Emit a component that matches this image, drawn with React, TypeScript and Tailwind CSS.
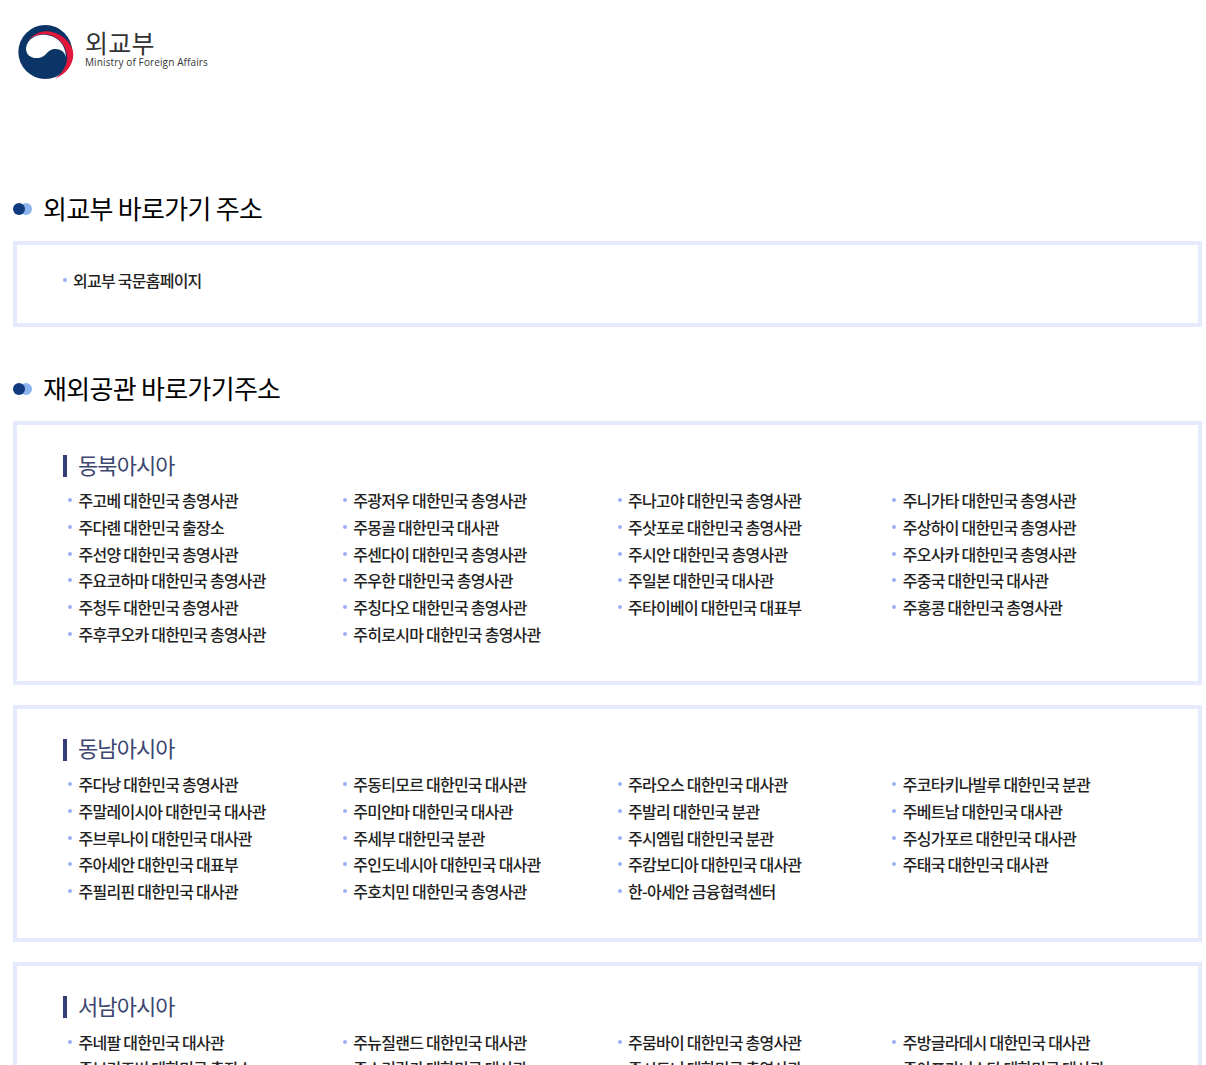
const northeast = [
  '주고베 대한민국 총영사관', '주광저우 대한민국 총영사관', '주나고야 대한민국 총영사관', '주니가타 대한민국 총영사관',
  '주다롄 대한민국 출장소', '주몽골 대한민국 대사관', '주삿포로 대한민국 총영사관', '주상하이 대한민국 총영사관',
  '주선양 대한민국 총영사관', '주센다이 대한민국 총영사관', '주시안 대한민국 총영사관', '주오사카 대한민국 총영사관',
  '주요코하마 대한민국 총영사관', '주우한 대한민국 총영사관', '주일본 대한민국 대사관', '주중국 대한민국 대사관',
  '주청두 대한민국 총영사관', '주칭다오 대한민국 총영사관', '주타이베이 대한민국 대표부', '주홍콩 대한민국 총영사관',
  '주후쿠오카 대한민국 총영사관', '주히로시마 대한민국 총영사관',
];

const southeast = [
  '주다낭 대한민국 총영사관', '주동티모르 대한민국 대사관', '주라오스 대한민국 대사관', '주코타키나발루 대한민국 분관',
  '주말레이시아 대한민국 대사관', '주미얀마 대한민국 대사관', '주발리 대한민국 분관', '주베트남 대한민국 대사관',
  '주브루나이 대한민국 대사관', '주세부 대한민국 분관', '주시엠립 대한민국 분관', '주싱가포르 대한민국 대사관',
  '주아세안 대한민국 대표부', '주인도네시아 대한민국 대사관', '주캄보디아 대한민국 대사관', '주태국 대한민국 대사관',
  '주필리핀 대한민국 대사관', '주호치민 대한민국 총영사관', '한-아세안 금융협력센터',
];

const southwest = [
  '주네팔 대한민국 대사관', '주뉴질랜드 대한민국 대사관', '주뭄바이 대한민국 총영사관', '주방글라데시 대한민국 대사관',
  '주브리즈번 대한민국 출장소', '주스리랑카 대한민국 대사관', '주시드니 대한민국 총영사관', '주아프가니스탄 대한민국 대사관',
];

function Logo() {
  return (
    <svg width="58" height="58" viewBox="18 24 174 174" className="shrink-0">
      <circle cx="106" cy="105" r="81" fill="#0b3467" />
      <path d="M48 85C60 55 88 42 112 43c46 3 78 40 78 69 0 33-24 60-54 73 24-19 38-44 35-70C167 75 130 50 100 52 75 53 55 65 48 85z" fill="#e0163a" />
      <path d="M48 92C53 66 76 53 100 53c36 0 68 26 68 68-4-20-23-28-40-24-16 4-20 21-38 25-22 5-44-7-42-30z" fill="#fff" />
    </svg>
  );
}

function SectionTitle({ children }: { children: string }) {
  return (
    <h2 className="flex items-center h-[34px] text-[26px] font-normal tracking-[-0.7px] text-black">
      <span className="relative w-[19px] h-3 mr-[11px]">
        <span className="absolute right-0 top-0 w-3 h-3 rounded-full bg-[#8db4ee]" />
        <span className="absolute left-0 top-0 w-3 h-3 rounded-full bg-[#0f3a7d]" />
      </span>
      <span className="-mt-[3px]">{children}</span>
    </h2>
  );
}

function Region({ title, items }: { title: string; items: string[] }) {
  return (
    <section className="border-4 border-[#e6eafd] pl-[46px] pr-9 pt-[30px] pb-[34px]">
      <h3 className="border-l-4 border-[#353f75] pl-[11px] h-[22px] flex items-center text-[22px] tracking-[-0.9px] font-normal text-[#3c4670]">
        <span className="-mt-[4px]">{title}</span>
      </h3>
      <ul className="grid grid-cols-4 mt-[10px]">
        {items.map((name) => (
          <li key={name} className="flex items-center h-[26.67px] pl-[5px] text-[16px] font-medium tracking-[-0.75px] text-[#222]">
            <span className="w-1 h-1 rounded-full bg-[#9db0f5] mr-[6.5px] shrink-0" />
            {name}
          </li>
        ))}
      </ul>
    </section>
  );
}

export default function App() {
  return (
    <div className="h-[1065px] overflow-hidden bg-white pl-[13px] font-['Noto_Sans_CJK_KR','Noto_Sans',sans-serif]">
      <div className="w-[1189px]">
        <header className="flex items-start h-[104px] pl-[3px] pt-[25px]">
          <Logo />
          <div className="ml-[11px] mt-[2px]">
            <div className="text-[25px] leading-[30px] tracking-[0.2px] text-[#333]">외교부</div>
            <div className="mt-[-1px] text-[10px] leading-[12px] tracking-[0.12px] font-medium font-['Open_Sans',sans-serif] text-[#333]">Ministry of Foreign Affairs</div>
          </div>
        </header>

        <div className="mt-[88px]">
          <SectionTitle>외교부 바로가기 주소</SectionTitle>
          <div className="mt-[15px] h-[86px] border-4 border-[#e6eafd] pl-[46px] pt-[22px]">
            <div className="flex items-center h-[26.67px] text-[16px] font-medium tracking-[-0.75px] text-[#222]">
              <span className="w-1 h-1 rounded-full bg-[#9db0f5] mr-[6px] shrink-0" />
              외교부 국문홈페이지
            </div>
          </div>
        </div>

        <div className="mt-[45px]">
          <SectionTitle>재외공관 바로가기주소</SectionTitle>
          <div className="mt-[15px] flex flex-col gap-5">
            <Region title="동북아시아" items={northeast} />
            <Region title="동남아시아" items={southeast} />
            <Region title="서남아시아" items={southwest} />
          </div>
        </div>
      </div>
    </div>
  );
}
